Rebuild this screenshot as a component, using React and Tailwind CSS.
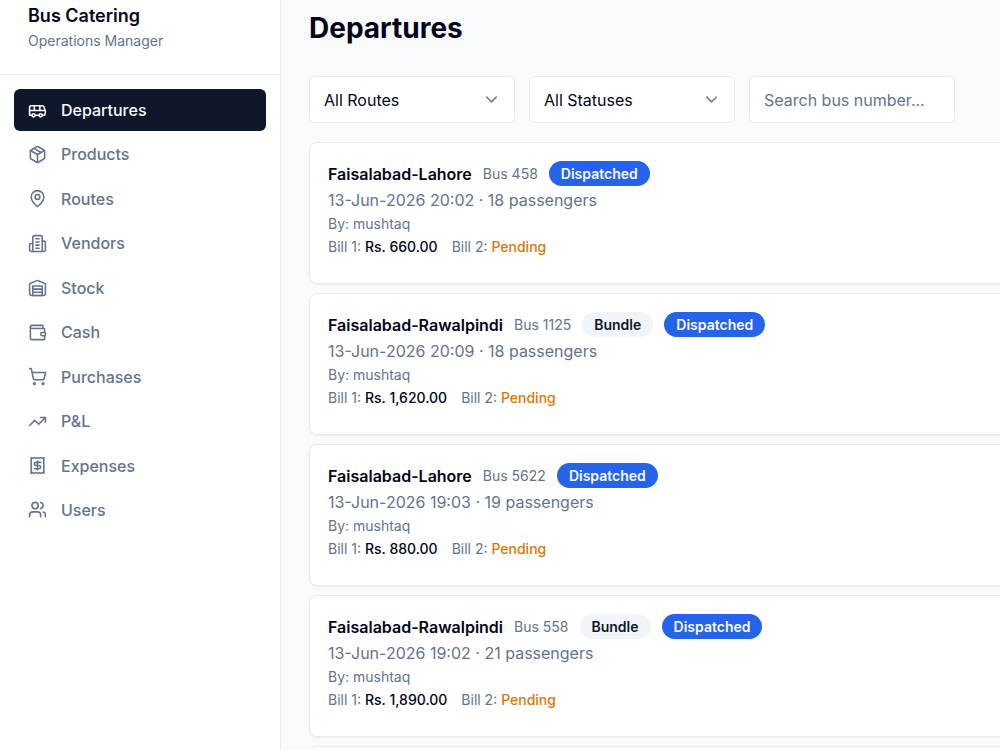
import React, { useState } from 'react';
import {
  Bus,
  Package,
  MapPin,
  Wallet,
  ShoppingCart,
  TrendingUp,
  Users,
  ChevronDown,
} from 'lucide-react';

const Icon = ({ className, children }) => (
  <svg
    viewBox="0 0 24 24"
    fill="none"
    stroke="currentColor"
    strokeWidth="2"
    strokeLinecap="round"
    strokeLinejoin="round"
    className={className}
  >
    {children}
  </svg>
);

const VendorIcon = ({ className }) => (
  <Icon className={className}>
    <path d="M6 22V4a2 2 0 0 1 2-2h8a2 2 0 0 1 2 2v18Z" />
    <path d="M6 12H4a2 2 0 0 0-2 2v6a2 2 0 0 0 2 2h2" />
    <path d="M18 9h2a2 2 0 0 1 2 2v9a2 2 0 0 1-2 2h-2" />
    <path d="M10 6h4M10 10h4M10 14h4M10 18h4" />
  </Icon>
);

const StockIcon = ({ className }) => (
  <Icon className={className}>
    <path d="M22 8.35V20a2 2 0 0 1-2 2H4a2 2 0 0 1-2-2V8.35A2 2 0 0 1 3.26 6.5l8-3.2a2 2 0 0 1 1.48 0l8 3.2A2 2 0 0 1 22 8.35Z" />
    <path d="M6 18h12M6 14h12" />
    <rect width="12" height="12" x="6" y="10" />
  </Icon>
);

const ReceiptIcon = ({ className }) => (
  <Icon className={className}>
    <path d="M4 2v20l2-1 2 1 2-1 2 1 2-1 2 1 2-1 2 1V2l-2 1-2-1-2 1-2-1-2 1-2-1-2 1Z" />
    <path d="M16 8h-6a2 2 0 1 0 0 4h4a2 2 0 1 1 0 4H8" />
    <path d="M12 17.5v-11" />
  </Icon>
);

const NAV_ITEMS = [
  { label: 'Departures', icon: Bus },
  { label: 'Products', icon: Package },
  { label: 'Routes', icon: MapPin },
  { label: 'Vendors', icon: VendorIcon },
  { label: 'Stock', icon: StockIcon },
  { label: 'Cash', icon: Wallet },
  { label: 'Purchases', icon: ShoppingCart },
  { label: 'P&L', icon: TrendingUp },
  { label: 'Expenses', icon: ReceiptIcon },
  { label: 'Users', icon: Users },
];

const DEPARTURES = [
  { id: 1, route: 'Faisalabad-Lahore', bus: '458', time: '13-Jun-2026 20:02', passengers: 18, bill: 'Rs. 660.00' },
  { id: 2, route: 'Faisalabad-Rawalpindi', bus: '1125', bundle: true, time: '13-Jun-2026 20:09', passengers: 18, bill: 'Rs. 1,620.00' },
  { id: 3, route: 'Faisalabad-Lahore', bus: '5622', time: '13-Jun-2026 19:03', passengers: 19, bill: 'Rs. 880.00' },
  { id: 4, route: 'Faisalabad-Rawalpindi', bus: '558', bundle: true, time: '13-Jun-2026 19:02', passengers: 21, bill: 'Rs. 1,890.00' },
];

const Sidebar = () => (
  <aside className="w-[281px] shrink-0 border-r border-[#e6ebf1] bg-white">
    <div className="border-b border-[#e6ebf1] px-7 pt-1 pb-[23px]">
      <div className="text-lg leading-6 font-semibold">Bus Catering</div>
      <p className="mt-[3px] text-sm leading-5 text-[#64748b]">Operations Manager</p>
    </div>
    <nav className="m-3.5 flex h-[442px] flex-col justify-between">
      {NAV_ITEMS.map(({ label, icon: NavIcon }, i) => (
        <a
          key={label}
          href="#"
          className={`flex h-[42px] items-center gap-3.5 rounded-md px-3.5 text-base font-medium ${
            i === 0 ? 'bg-[#0f172a] text-slate-50' : 'text-[#64748b]'
          }`}
        >
          <NavIcon className="h-[19px] w-[19px]" />
          {label}
        </a>
      ))}
    </nav>
  </aside>
);

const FilterSelect = ({ label }) => (
  <div className="relative w-[206px]">
    <select
      aria-label={label}
      className="h-[47px] w-full appearance-none rounded-md border border-[#e6ebf1] bg-white px-3.5 text-base"
    >
      <option>{label}</option>
    </select>
    <ChevronDown className="pointer-events-none absolute top-3.5 right-3.5 h-[19px] w-[19px] opacity-50" />
  </div>
);

const DepartureCard = ({ departure }) => (
  <article className="rounded-lg border border-[#e6ebf1] bg-white px-[18px] pt-[18px] pb-[26px] shadow-xs">
    <div className="flex h-[25px] items-center gap-[11px]">
      <h2 className="text-base font-semibold">{departure.route}</h2>
      <span className="text-sm text-[#64748b]">Bus {departure.bus}</span>
      {departure.bundle && (
        <span className="rounded-full bg-slate-100 px-3 text-sm leading-[25px] font-semibold text-[#0f172a]">
          Bundle
        </span>
      )}
      <span className="rounded-full bg-[#2563eb] px-3 text-sm leading-[25px] font-semibold text-slate-50">
        Dispatched
      </span>
    </div>
    <p className="text-base leading-7 text-[#64748b]">
      {departure.time} · {departure.passengers} passengers
    </p>
    <p className="text-sm leading-5 text-[#64748b]">By: mushtaq</p>
    <div className="mt-[3px] flex gap-3.5 text-sm leading-5 text-[#64748b]">
      <span>
        Bill 1: <span className="font-medium text-slate-950">{departure.bill}</span>
      </span>
      <span>
        Bill 2: <span className="font-medium text-[#d97706]">Pending</span>
      </span>
    </div>
  </article>
);

export default function App() {
  const [search, setSearch] = useState('');

  return (
    <div className="flex h-screen overflow-hidden bg-slate-50 font-[Inter,sans-serif] text-slate-950">
      <Sidebar />
      <main className="min-w-0 flex-1 pt-2 pl-7">
        <h1 className="text-[28px] leading-10 font-bold">Departures</h1>
        <div className="mt-7 flex gap-3.5">
          <FilterSelect label="All Routes" />
          <FilterSelect label="All Statuses" />
          <input
            type="text"
            aria-label="Search bus number"
            placeholder="Search bus number..."
            value={search}
            onChange={(e) => setSearch(e.target.value)}
            className="h-[47px] w-[206px] rounded-md border border-[#e6ebf1] bg-white px-3.5 text-base placeholder:text-[#64748b]"
          />
        </div>
        <div className="mt-[19px] -mr-5 flex flex-col gap-[9px]">
          {DEPARTURES.map((departure) => (
            <DepartureCard key={departure.id} departure={departure} />
          ))}
          <div className="h-36 rounded-lg border border-[#e6ebf1] bg-white" />
        </div>
      </main>
    </div>
  );
}
